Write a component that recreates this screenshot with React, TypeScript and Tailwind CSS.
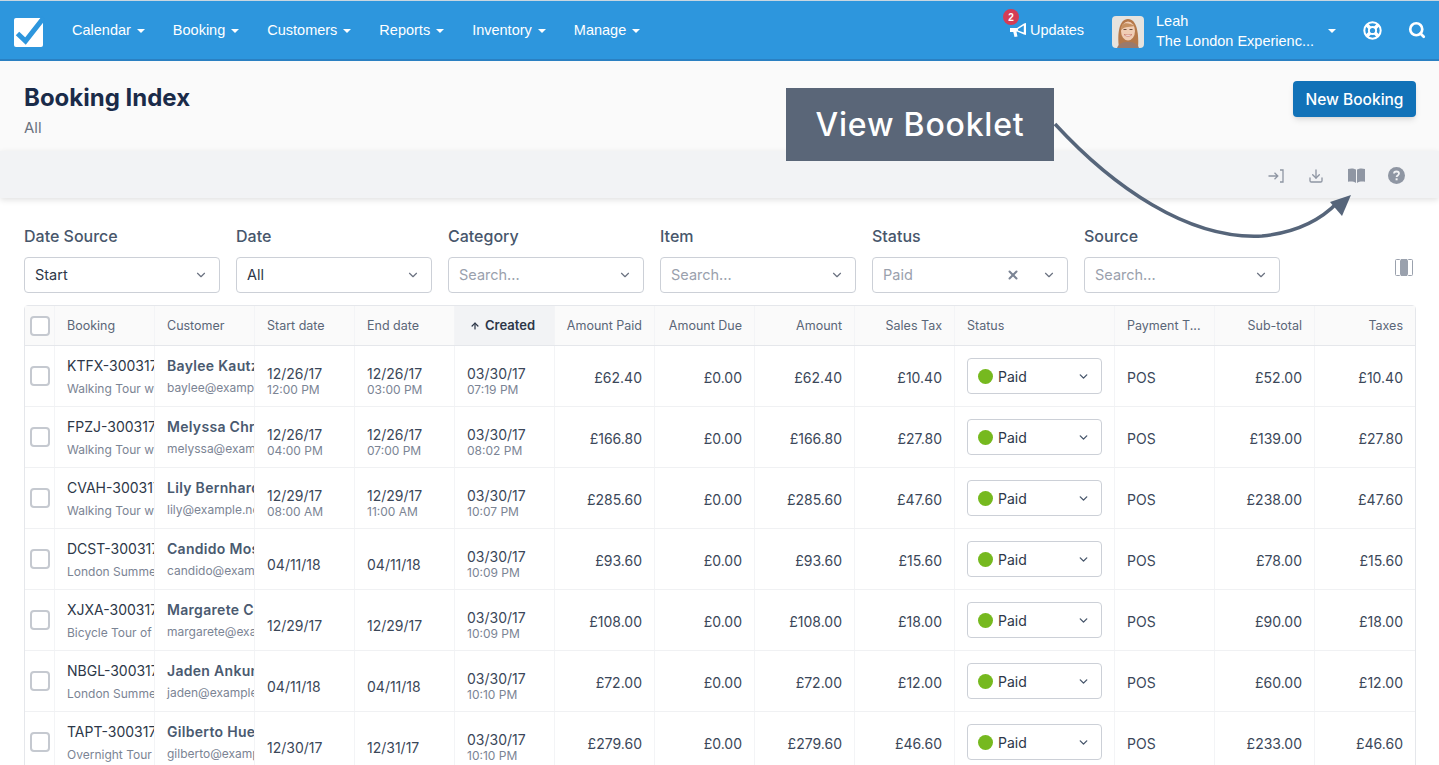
import { ChevronDown, X, Search, Download, ArrowUp } from 'lucide-react';

const navItems = ['Calendar', 'Booking', 'Customers', 'Reports', 'Inventory', 'Manage'];

const filters = [
  { label: 'Date Source', value: 'Start', dark: true },
  { label: 'Date', value: 'All', dark: true },
  { label: 'Category', value: 'Search...' },
  { label: 'Item', value: 'Search...' },
  { label: 'Status', value: 'Paid', clear: true },
  { label: 'Source', value: 'Search...' },
];

const rows = [
  { code: 'KTFX-300317-1', tour: 'Walking Tour with Guide', name: 'Baylee Kautzer', email: 'baylee@example.net', start: '12/26/17', startT: '12:00 PM', end: '12/26/17', endT: '03:00 PM', created: '07:19 PM', paid: '£62.40', tax: '£10.40', sub: '£52.00' },
  { code: 'FPZJ-300317-1', tour: 'Walking Tour with Guide', name: 'Melyssa Christiansen', email: 'melyssa@example.net', start: '12/26/17', startT: '04:00 PM', end: '12/26/17', endT: '07:00 PM', created: '08:02 PM', paid: '£166.80', tax: '£27.80', sub: '£139.00' },
  { code: 'CVAH-300317-1', tour: 'Walking Tour with Guide', name: 'Lily Bernhard', email: 'lily@example.net', start: '12/29/17', startT: '08:00 AM', end: '12/29/17', endT: '11:00 AM', created: '10:07 PM', paid: '£285.60', tax: '£47.60', sub: '£238.00' },
  { code: 'DCST-300317-1', tour: 'London Summer Pass', name: 'Candido Mosciski', email: 'candido@example.net', start: '04/11/18', end: '04/11/18', created: '10:09 PM', paid: '£93.60', tax: '£15.60', sub: '£78.00' },
  { code: 'XJXA-300317-1', tour: 'Bicycle Tour of London', name: 'Margarete Cole', email: 'margarete@example.net', start: '12/29/17', end: '12/29/17', created: '10:09 PM', paid: '£108.00', tax: '£18.00', sub: '£90.00' },
  { code: 'NBGL-300317-1', tour: 'London Summer Pass', name: 'Jaden Ankunding', email: 'jaden@example.net', start: '04/11/18', end: '04/11/18', created: '10:10 PM', paid: '£72.00', tax: '£12.00', sub: '£60.00' },
  { code: 'TAPT-300317-1', tour: 'Overnight Tour Package', name: 'Gilberto Huel', email: 'gilberto@example.net', start: '12/30/17', end: '12/31/17', created: '10:10 PM', paid: '£279.60', tax: '£46.60', sub: '£233.00' },
];

const cols = 'grid grid-cols-[30px_repeat(9,100px)_160px_repeat(3,100px)]';
const cell = 'border-r border-[#f3f4f6] overflow-hidden whitespace-nowrap';

function Caret() {
  return <span className="ml-[6px] inline-block border-x-[4px] border-t-[4px] border-x-transparent border-t-white" />;
}

function Logo() {
  return (
    <svg width="32" height="32" viewBox="0 0 32 32">
      <rect x="1" y="3" width="29" height="29" rx="2" fill="#fff" />
      <path d="M4.5 18.5 L12.5 26 L30.5 3" fill="none" stroke="#2d96dd" strokeWidth="5" />
    </svg>
  );
}

function Avatar() {
  return (
    <svg width="32" height="32" viewBox="0 0 32 32" className="rounded-[4px] blur-[0.3px]">
      <rect width="32" height="32" fill="#e6e3de" />
      <path d="M7 32 C5 18 7 3 16 3 C25 3 27 18 26 32 Z" fill="#b5794a" />
      <path d="M5 32 C7 27 11 26 16 26 C21 26 25 27 27 32 Z" fill="#9a7a6c" />
      <ellipse cx="16" cy="15" rx="7" ry="9.5" fill="#f0cdb4" />
      <path d="M9 14 C9 7 14 5 23 10 C19 11 13 10 9 14 Z" fill="#c69060" />
      <rect x="11.5" y="13" width="3" height="1" fill="#6b5040" />
      <rect x="17.5" y="13" width="3" height="1" fill="#6b5040" />
      <path d="M12 18.5 Q16 22.5 20 18.5 Q16 19.5 12 18.5 Z" fill="#fff" stroke="#b9564f" strokeWidth="0.5" />
    </svg>
  );
}

function Megaphone() {
  return (
    <svg width="17" height="16" viewBox="0 0 17 16" fill="#fff">
      <path d="M0 6 L7 6 L14 1.5 L16 1 L16 13 L14 12.5 L7 9.5 L6.5 9.7 L7.5 14.5 L4.5 15 L3.3 10 L0 10 Z M13.8 3.6 L8 7 L8 8.4 L13.8 10.6 Z" fillRule="evenodd" />
    </svg>
  );
}

function RingIcon() {
  return (
    <svg width="19" height="19" viewBox="0 0 19 19" fill="none" stroke="#fff">
      <circle cx="9.5" cy="9.5" r="8.2" strokeWidth="2" />
      <circle cx="9.5" cy="9.5" r="3.6" strokeWidth="2" />
      <path d="M3.7 3.7 L6.9 6.9 M15.3 3.7 L12.1 6.9 M3.7 15.3 L6.9 12.1 M15.3 15.3 L12.1 12.1" strokeWidth="3.6" />
    </svg>
  );
}

function BookIcon() {
  return (
    <svg width="17" height="15" viewBox="0 0 17 15" fill="#8f96a3">
      <path d="M0 1 C3 0 6 0.3 8 1.6 L8 15 C6 13.6 3 13.2 0 13.8 Z" />
      <path d="M17 1 C14 0 11 0.3 9 1.6 L9 15 C11 13.6 14 13.2 17 13.8 Z" />
    </svg>
  );
}

function ImportIcon() {
  return (
    <svg width="16" height="14" viewBox="0 0 16 14" fill="none" stroke="#8f96a3" strokeWidth="1.3">
      <path d="M0.5 7 H9.5 M6.5 3.8 L9.8 7 L6.5 10.2" />
      <path d="M12 1 H15 V13 H12" />
    </svg>
  );
}

function HelpIcon() {
  return (
    <svg width="17" height="17" viewBox="0 0 17 17">
      <circle cx="8.5" cy="8.5" r="8.5" fill="#8f96a3" />
      <path d="M6 6.6 C6 3.8 11 3.8 11 6.6 C11 8.4 8.6 8.4 8.6 10" fill="none" stroke="#f2f3f5" strokeWidth="1.8" />
      <rect x="7.6" y="11.3" width="2" height="2" fill="#f2f3f5" />
    </svg>
  );
}

function ColumnsIcon() {
  return (
    <svg width="18" height="17" viewBox="0 0 18 17" fill="none" stroke="#9aa1ad">
      <rect x="0.5" y="0.5" width="5" height="16" rx="1" />
      <rect x="6.5" y="0.5" width="5" height="16" fill="#9aa1ad" />
      <rect x="12.5" y="0.5" width="5" height="16" rx="1" />
    </svg>
  );
}

export default function App() {
  return (
    <div className="relative h-[765px] overflow-hidden bg-white text-[#2d3748] font-['Inter',sans-serif]">
      {/* Top nav */}
      <header className="h-[61px] pt-[2px] border-t border-[#c9d6e0] border-b-2 border-b-[#2a80c2] bg-[#2d96dd] flex items-center text-white font-['Liberation_Sans',sans-serif] text-[14.5px]">
        <div className="ml-[13px] w-[32px] h-[32px]"><Logo /></div>
        <nav className="ml-[27px] flex gap-[28px]">
          {navItems.map(item => (
            <span key={item} className="flex items-center">{item}<Caret /></span>
          ))}
        </nav>
        <div className="ml-auto flex items-center">
          <div className="relative flex items-center gap-[3px]">
            <span className="absolute -top-[11px] -left-[7px] w-[16px] h-[16px] rounded-full bg-[#d43c55] text-[10px] font-bold flex items-center justify-center">2</span>
            <span className="-mt-[2px]"><Megaphone /></span>
            <span>Updates</span>
          </div>
          <div className="ml-[28px] mt-[2px] h-[32px]"><Avatar /></div>
          <div className="ml-[12px] w-[172px] leading-[20px]">
            <div className="font-medium">Leah</div>
            <div>The London Experienc...</div>
          </div>
          <span className="border-x-[4px] border-t-[4px] border-x-transparent border-t-white" />
          <span className="ml-[27px] -mt-[2px]"><RingIcon /></span>
          <Search size={18} strokeWidth={3.6} className="ml-[26px] mr-[13px] -mt-[2px]" />
        </div>
      </header>

      {/* Title */}
      <div className="h-[90px] bg-[#fafafa] flex justify-between pl-[24px] pr-[23px]">
        <div className="pt-[21px]">
          <h1 className="text-[24px] leading-[32px] font-bold text-[#1a2b49]">Booking Index</h1>
          <p className="mt-[4px] text-[15px] leading-[20px] text-[#6b7280]">All</p>
        </div>
        <button className="mt-[20px] h-[36px] w-[123px] pt-[1px] rounded-[4px] bg-[#1172b8] text-white text-[15.5px] font-medium shadow-md">New Booking</button>
      </div>

      {/* Toolbar */}
      <div className="h-[47px] pt-[2px] bg-[#f2f3f5] shadow-[0_2px_6px_rgba(0,0,0,0.12)] flex items-center justify-end pr-[23px]">
        <span className="w-[40px] flex justify-center"><ImportIcon /></span>
        <span className="w-[40px] flex justify-center"><Download size={16} color="#8f96a3" /></span>
        <span className="w-[40px] flex justify-center"><BookIcon /></span>
        <span className="w-[40px] flex justify-center"><HelpIcon /></span>
      </div>

      {/* Filters */}
      <div className="mt-[27px] pl-[24px] flex gap-[16px]">
        {filters.map(f => (
          <div key={f.label} className="w-[196px]">
            <div className="text-[16px] leading-[22px] font-medium text-[#47566b]">{f.label}</div>
            <div className="mt-[10px] h-[36px] rounded-[4px] border border-[#ccd0d7] flex items-center pl-[10px] pr-[11px] text-[14.5px]">
              <span className={f.dark ? 'text-[#2d3748]' : 'text-[#9aa1ad]'}>{f.value}</span>
              {f.clear && <X size={14} strokeWidth={3.5} color="#7b8494" className="ml-auto mr-[22px]" />}
              <ChevronDown size={14} color="#6b7280" className={f.clear ? '' : 'ml-auto'} />
            </div>
          </div>
        ))}
        <div className="ml-[99px] mt-[34px] w-[18px]"><ColumnsIcon /></div>
      </div>

      {/* Table */}
      <div className="mt-[12px] ml-[24px] w-[1392px] rounded-t-[4px] border border-[#e5e7eb] text-[14px]">
        <div className={`${cols} h-[40px] bg-[#fafafa] border-b border-[#e5e7eb] text-[12.5px] text-[#5a6678] leading-[39px]`}>
          <div className={`${cell} flex items-center pl-[5px]`}>
            <span className="w-[20px] h-[20px] rounded-[4px] border-2 border-[#c5c9d0] bg-white" />
          </div>
          {['Booking', 'Customer', 'Start date', 'End date'].map(h => (
            <div key={h} className={`${cell} pl-[12px]`}>{h}</div>
          ))}
          <div className={`${cell} bg-[#f2f3f5] flex items-center pl-[15px] gap-[5px] text-[13px] font-semibold text-[#2d3748]`}>
            <ArrowUp size={10} strokeWidth={3} />Created
          </div>
          {['Amount Paid', 'Amount Due', 'Amount', 'Sales Tax'].map(h => (
            <div key={h} className={`${cell} pr-[12px] text-right`}>{h}</div>
          ))}
          <div className={`${cell} pl-[12px]`}>Status</div>
          <div className={`${cell} pl-[12px]`}>Payment T...</div>
          <div className={`${cell} pr-[12px] text-right`}>Sub-total</div>
          <div className="pr-[12px] text-right">Taxes</div>
        </div>

        {rows.map(r => (
          <div key={r.code} className={`${cols} h-[61px] border-b border-[#f0f1f3] text-[#3b4759]`}>
            <div className={`${cell} flex items-center pl-[5px]`}>
              <span className="w-[20px] h-[20px] rounded-[4px] border-2 border-[#c5c9d0] bg-white" />
            </div>
            <div className={`${cell} pl-[12px] pt-[10px]`}>
              <div className="text-[14px] leading-[20px] text-[#2d3748]">{r.code}</div>
              <div className="mt-[4px] text-[12px] leading-[18px] text-[#7b8494]">{r.tour}</div>
            </div>
            <div className={`${cell} pl-[12px] pt-[10px]`}>
              <div className="text-[14px] leading-[20px] font-semibold text-[#4a5a70] tracking-[0.3px]">{r.name}</div>
              <div className="mt-[3px] text-[12px] leading-[18px] text-[#7b8494]">{r.email}</div>
            </div>
            {[[r.start, r.startT], [r.end, r.endT]].map(([d, t], i) => (
              <div key={i} className={`${cell} pl-[12px] flex flex-col justify-center ${t ? 'pt-[9px]' : 'pt-[11px]'}`}>
                <div className="leading-[17px]">{d}</div>
                {t && <div className="text-[12px] leading-[15px] text-[#7b8494]">{t}</div>}
              </div>
            ))}
            <div className={`${cell} pl-[12px] flex flex-col justify-center pt-[9px]`}>
              <div className="leading-[18px]">03/30/17</div>
              <div className="text-[12px] leading-[14px] text-[#7b8494]">{r.created}</div>
            </div>
            {[r.paid, '£0.00', r.paid, r.tax].map((v, i) => (
              <div key={i} className={`${cell} pr-[12px] pt-[2px] flex items-center justify-end`}>{v}</div>
            ))}
            <div className={`${cell} pl-[12px] flex items-center`}>
              <div className="w-[135px] h-[36px] rounded-[4px] border border-[#ccd0d7] flex items-center pl-[10px] pr-[11px]">
                <span className="w-[15px] h-[15px] rounded-full bg-[#76b91f]" />
                <span className="ml-[5px] text-[#2d3748]">Paid</span>
                <ChevronDown size={13} color="#47566b" strokeWidth={2.5} className="ml-auto" />
              </div>
            </div>
            <div className={`${cell} pl-[12px] pt-[2px] flex items-center`}>POS</div>
            <div className={`${cell} pr-[12px] pt-[2px] flex items-center justify-end`}>{r.sub}</div>
            <div className="pr-[12px] pt-[2px] flex items-center justify-end">{r.tax}</div>
          </div>
        ))}
      </div>

      {/* Annotation */}
      <div className="absolute left-[786px] top-[88px] w-[268px] h-[73px] bg-[#5a6678] flex items-center justify-center text-white text-[32px] font-medium tracking-[0.8px]">
        View Booklet
      </div>
      <svg className="absolute left-[1050px] top-[120px]" width="310" height="125" viewBox="0 0 310 125" fill="none">
        <path d="M5 4 C62 66 138 120 212 116 C242 113 268 103 288 82" stroke="#56657a" strokeWidth="3.5" />
        <path d="M301 75 L280 82 L292 96 Z" fill="#56657a" />
      </svg>
    </div>
  );
}
